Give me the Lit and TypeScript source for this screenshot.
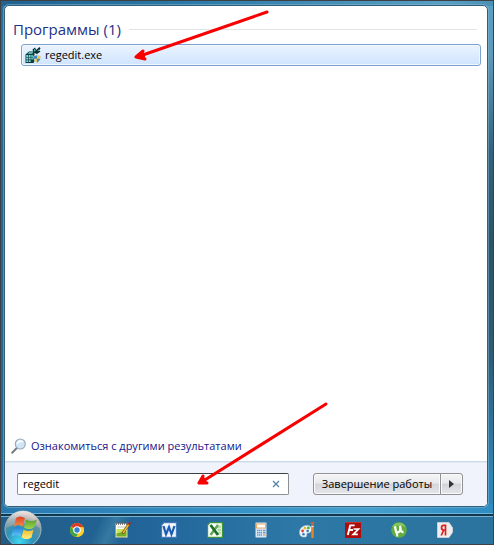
import { LitElement, html, css, svg } from "lit";
import { customElement, property, state } from "lit/decorators.js";

const icons: Record<string, unknown> = {
  chrome: svg`
    <circle cx="8" cy="8" r="7" fill="#f6c51e"/>
    <path d="M8 8 1.9 4.6A7 7 0 0 1 14.4 5.2L8 5.2Z" fill="#dc3a2b"/>
    <path d="M1.9 4.6A7 7 0 0 0 7.2 15L10.4 9.4 8 8 5.4 9.4Z" fill="#3fa445"/>
    <path d="M14.4 5.2A7 7 0 0 1 7.2 15L10.6 9 8 5.2Z" fill="#fbd02b"/>
    <circle cx="8" cy="8" r="3.8" fill="#fff"/><circle cx="8" cy="8" r="2.7" fill="#3a80d0"/>`,
  notepad: svg`
    <path d="M.5 1.500h12v14H.5z" fill="#fdfdf6" stroke="#8b8f80" stroke-width=".6"/>
    <path d="M1.500 7h10v7.500h-10z" fill="#c8e35c"/><path d="M1.500 11.500l10-2.500v5.500h-10z" fill="#72ad28"/>
    <path d="M1.500 .5v2.500M3.500 .5v2.500M5.500 .5v2.500M7.500 .5v2.500M9.500 .5v2.500M11.500 .5v2.500" stroke="#666" stroke-width=".8"/>
    <path d="M2.500 5h8" stroke="#b9bcb0" stroke-width=".8"/>
    <path d="M7.500 11.500 14 2" stroke="#704214" stroke-width="2.600"/><path d="M8 11 14 2.200" stroke="#f2c12d" stroke-width="1.500"/>
    <path d="M13.600 2.800 15.200 .5" stroke="#a5301e" stroke-width="2.400"/>`,
  word: svg`
    <path d="M3 .6h12.400v14.800H.6V3z" fill="#fff" stroke="#4579c0" stroke-width="1.200"/>
    <path d="M2 3.500h12v9.500H2z" fill="#e4eefa"/>
    <path d="M2.500 4 5 12.300 8 5 10.500 12.300 13.500 4" fill="none" stroke="#1d5cb4" stroke-width="2.200"/>`,
  excel: svg`
    <path d="M3 .6h12.400v14.800H.6V3z" fill="#fff" stroke="#3f963f" stroke-width="1.200"/>
    <path d="M10.500 2.500h3.500v11h-3.500z" fill="#d8edce"/><path d="M10.500 5h3.500M10.500 8h3.500M10.500 11h3.500" stroke="#7bb872" stroke-width=".7"/>
    <path d="M11 3 3.500 13" stroke="#62ab54" stroke-width="2.600"/><path d="M3.500 3 11 13" stroke="#1f6f2c" stroke-width="2.800"/>`,
  calc: svg`
    <rect x="2.500" y=".5" width="11" height="15" rx="1" fill="#d8e8f5" stroke="#86abc9" stroke-width=".8"/>
    <rect x="3.500" y="2" width="9" height="4" fill="#fff" stroke="#f0a255" stroke-width=".9"/>
    <path d="M4 8.500h5M4 10.800h5M4 13h5" stroke="#6f9bc3" stroke-width="1.400" stroke-dasharray="1.500 .5"/>
    <path d="M10 8.500h2.500M10 10.800h2.500" stroke="#6f9bc3" stroke-width="1.400"/><path d="M10 13h2.500" stroke="#f0a255" stroke-width="1.400"/>`,
  paint: svg`
    <path d="M.5 10.500C.5 5.500 5 3 9 3.500s4.500 4.500 2.500 6.500-2.500 0-3.500 1.500 1 3-2 3.500S.5 14 .5 10.500Z" fill="#eef6fb" stroke="#a5c4d8" stroke-width=".6"/>
    <circle cx="3.600" cy="9" r="1.400" fill="#e0442e"/><circle cx="6" cy="6.200" r="1.400" fill="#eeb62f"/>
    <circle cx="9.400" cy="6" r="1.400" fill="#54ae44"/><circle cx="4.500" cy="12.300" r="1.300" fill="#347bcb"/><circle cx="8.600" cy="9" r="1.300" fill="#3f74b5"/>
    <path d="M13.500 6v9" stroke="#e8842a" stroke-width="2.400" stroke-linecap="round"/><path d="M11.500 0h4l-1 4h-2z" fill="#b96a3e"/><path d="M12.300 4.500h2.400" stroke="#dde4ea" stroke-width="1.400"/>`,
  filezilla: svg`
    <path d="M0 0h16v16H0z" fill="#ae0b0b"/><path d="M0 0h16v1H0z" fill="#c73229"/>
    <path d="M9.700 3.400H5.200L2.800 13M4 8h4" fill="none" stroke="#fff" stroke-width="1.900"/>
    <path d="M8.500 7h5L8.200 12.300h4.600" fill="none" stroke="#fff" stroke-width="1.700"/>`,
  utorrent: svg`
    <circle cx="8" cy="8" r="7.800" fill="#62ad3d"/><path d="M1 5a7.800 7.800 0 0 1 14 0Q8 2 1 5Z" fill="#83c65c"/>
    <path d="M4 4.300c.5 3 .6 6.500 3 6s2.800-2.500 2-6.500M9.300 6c.4 3 .8 4.200 3.200 4" fill="none" stroke="#fff" stroke-width="2.300"/>
    <path d="M5 9 6.500 14.500" stroke="#fff" stroke-width="2"/>`,
  yandex: svg`
    <path d="M.5.500h11.500L15.700 6v4L12 15.500H.5z" fill="#eeeeef" stroke="#d5d7da" stroke-width=".8"/>
    <path d="M8.500 2.500v11M8.500 3.400H6.700C3.800 3.400 3.800 8 6.700 8h1.800M6.800 8 4.200 13.500" fill="none" stroke="#df1f1f" stroke-width="1.700"/>`,
  regedit: svg`
    <path d="M.5 7.500 4 4.500h5.500v9.500l-1 2H.5z" fill="#123b3e"/>
    <path d="M1.300 8h1.800v1.900H1.300zM3.800 8h1.800v1.900H3.800zM6.300 8h1.500v1.900H6.300zM1.300 10.600h1.800v1.900H1.300zM3.800 10.600h1.800v1.900H3.800zM6.300 10.600h1.500v1.900H6.300zM1.300 13.200h1.800v1.900H1.300zM3.800 13.200h1.800v1.900H3.800zM4.300 5.300h4l-1.200 1.500H2.700z" fill="#6fe0dc"/>
    <path d="M7.500 2.500 10 .5l1.200 2.500L14.500 0l1 1.500L14 3.500l1.500 1L12 7 8.500 5.500z" fill="#10282b"/>
    <path d="M8.900 2.600l1-.7.8 2-1.200.8zM12.200 3.800l1.700-1.300v1.700z" fill="#52cfcb"/>
    <path d="M8.500 9q2 0 3.500-1.200Q13.500 9 15.500 9q.2 4.800-3.500 6.700Q8.300 13.800 8.500 9Z" fill="#f4c93c" stroke="#c5d0d8" stroke-width=".7"/>
    <path d="M12 8.200V11.800H8.900Q8.600 10.500 8.700 9.300 10.500 9.200 12 8.200ZM12 11.800h3.200q-.6 2.400-3.200 3.600z" fill="#3b84cd"/>`,
  search: svg`
    <path d="M1.200 14.800 5.800 10" stroke="#777d84" stroke-width="2" stroke-linecap="round"/>
    <circle cx="9.300" cy="6" r="5" fill="#cfe6f7" stroke="#98a6b3" stroke-width="1.100"/>
    <path d="M5.800 6.500a3.700 3.700 0 0 1 6.800-2.500Q8 3.500 5.800 6.500Z" fill="#fff"/>`,
};

@customElement("app-icon")
class AppIcon extends LitElement {
  @property() name = "";
  static styles = css`
    :host { display: block; width: 16px; height: 16px; flex: none; }
    svg { display: block; width: 100%; height: 100%; }
  `;
  render() {
    return html`<svg viewBox="0 0 16 16" aria-hidden="true">${icons[this.name]}</svg>`;
  }
}

@customElement("start-menu")
class StartMenu extends LitElement {
  @state() query = "regedit";
  static styles = css`
    :host {
      display: flex; flex-direction: column; position: relative; box-sizing: border-box;
      background: #fff; border: 1px solid #315f7a; border-radius: 5px;
      box-shadow: 0 0 0 1px #83b6d088;
    }
    .results { flex: 1; padding: 12px 6px 0 8px; }
    .group { display: flex; align-items: center; gap: 8px; }
    h2 { margin: 0; font-weight: 400; font-size: 15px; line-height: 22px; color: #1e3287; }
    .rule { flex: 1; height: 1px; background: #e2e5e5; margin-right: 4px; }
    .item {
      display: flex; align-items: center; gap: 4px; box-sizing: border-box;
      width: calc(100% - 8px); height: 22px; margin: 4px 0 0 8px; padding: 0 3px;
      border: 1px solid #7da2ce; border-radius: 3px;
      background: linear-gradient(#ebf4fe, #cfe4fe); box-shadow: inset 0 0 0 1px #f0f7ff;
      font: inherit; color: #000; text-align: left;
    }
    .more {
      display: flex; align-items: center; gap: 4px; align-self: flex-start;
      margin: 0 0 6px 6px; height: 18px; color: #14148a; text-decoration: none;
    }
    footer {
      display: flex; align-items: flex-start; gap: 24px; padding: 11px 24px 11px 12px;
      border-top: 1px solid #ccd9ea; background: #f0f3fb; border-radius: 0 0 4px 4px;
      box-shadow: inset 0 1px #e0e8f4;
    }
    .search {
      display: flex; align-items: center; flex: 1; height: 22px; box-sizing: border-box;
      background: #fff; border: 1px solid #8c8e92; border-top-color: #3f4042; border-radius: 2px;
    }
    input {
      flex: 1; min-width: 0; padding: 0 5px; border: 0; outline: 0; background: none;
      font: inherit; color: #000;
    }
    .clear { display: flex; padding: 0 8px; border: 0; background: none; }
    .clear svg { width: 8px; height: 8px; }
    .power { display: flex; height: 22px; }
    .power button {
      font: inherit; color: #000; border: 1px solid #8f9194; padding: 0; box-sizing: border-box;
      background: linear-gradient(#f5f5f6, #e8e9eb 46%, #d2d4d7 50%, #e6e7ea);
      box-shadow: inset 0 0 0 1px #fafafa;
    }
    .power .down { width: 128px; border-radius: 3px 0 0 3px; white-space: nowrap; }
    .power .opts { display: flex; align-items: center; justify-content: center; width: 23px; margin-left: -1px; border-radius: 0 3px 3px 0; }
    .arrow { position: absolute; pointer-events: none; fill: none; stroke: #f90000; stroke-width: 3; stroke-linecap: round; stroke-linejoin: round; }
    .to-item { left: 126px; top: 2px; }
    .to-search { left: 190px; bottom: 17px; }
  `;
  render() {
    return html`
      <div class="results">
        <div class="group"><h2>Программы (1)</h2><div class="rule"></div></div>
        <button class="item"><app-icon name="regedit"></app-icon>regedit.exe</button>
      </div>
      <a class="more" href="#"><app-icon name="search"></app-icon>Ознакомиться с другими результатами</a>
      <footer>
        <div class="search">
          <input aria-label="Поиск" .value=${this.query}
            @input=${(e: Event) => (this.query = (e.target as HTMLInputElement).value)} />
          <button class="clear" aria-label="Очистить" @click=${() => (this.query = "")}>
            <svg viewBox="0 0 8 8"><path d="M1 1 7 7M7 1 1 7" stroke="#5086ad" stroke-width="1.300"/></svg>
          </button>
        </div>
        <div class="power">
          <button class="down">Завершение работы</button>
          <button class="opts" aria-label="Параметры">
            <svg width="5" height="8" viewBox="0 0 5 8"><path d="M0 0 5 4 0 8Z" fill="#333"/></svg>
          </button>
        </div>
      </footer>
      <svg class="arrow to-item" width="142" height="54" viewBox="0 0 142 54">
        <path d="M136 4 6 49M12 43 5 49 14 51" /><path d="M5 49 12 43 14 51Z" fill="#f90000" stroke-width="1"/>
      </svg>
      <svg class="arrow to-search" width="136" height="90" viewBox="0 0 136 90">
        <path d="M131 5 5 84M8 77 4 84 12 84" /><path d="M4 84 8 77 12 84Z" fill="#f90000" stroke-width="1"/>
      </svg>
    `;
  }
}

@customElement("task-bar")
class TaskBar extends LitElement {
  static styles = css`
    :host {
      display: flex; height: 30px; box-sizing: border-box; position: relative;
      border-top: 2px solid #12374f;
      background: linear-gradient(115deg, transparent 20%, #6bb9c444 23%, transparent 26%), linear-gradient(90deg, #225d86, #22659a 30%, #2d78a6 60%, #2b739d);
      box-shadow: inset 0 1px #77b2ce, 0 -1px #6db4d8;
    }
    button { border: 0; padding: 0; background: none; }
    .start { width: 53px; flex: none; position: relative; }
    .start svg { position: absolute; left: 3px; top: -6px; }
    nav { display: flex; }
    .app { display: flex; width: 46px; align-items: center; justify-content: center; }
  `;
  render() {
    const apps = [
      ["chrome", "Chrome"], ["notepad", "Notepad"], ["word", "Word"], ["excel", "Excel"],
      ["calc", "Калькулятор"], ["paint", "Paint"], ["filezilla", "FileZilla"],
      ["utorrent", "µTorrent"], ["yandex", "Яндекс"],
    ];
    return html`
      <button class="start" aria-label="Пуск">
        <svg width="38" height="34" viewBox="0 0 38 34">
          <defs>
            <radialGradient id="orb" cx=".4" cy=".85" r=".8">
              <stop offset="0" stop-color="#3fd8f4"/><stop offset=".45" stop-color="#2f93b8"/>
              <stop offset=".8" stop-color="#5f8f9d"/><stop offset="1" stop-color="#b9a9a6"/>
            </radialGradient>
            <linearGradient id="gloss" x2="0" y2="1">
              <stop stop-color="#fff" stop-opacity=".7"/><stop offset="1" stop-color="#f4c0b0" stop-opacity=".25"/>
            </linearGradient>
            <linearGradient id="red" x2="0" y2="1"><stop stop-color="#dd4420"/><stop offset="1" stop-color="#f48a4c"/></linearGradient>
            <linearGradient id="green" x2="0" y2="1"><stop stop-color="#55a02f"/><stop offset="1" stop-color="#9dd64e"/></linearGradient>
            <linearGradient id="blue" x2="0" y2="1"><stop stop-color="#1f7fd5"/><stop offset="1" stop-color="#62c6f8"/></linearGradient>
            <linearGradient id="gold" x2="0" y2="1"><stop stop-color="#f5b829"/><stop offset="1" stop-color="#fff080"/></linearGradient>
          </defs>
          <circle cx="19" cy="19" r="18" fill="url(#orb)" stroke="#98bac6"/>
          <path d="M2 18A17 17 0 0 1 36 18Q19 10 2 18Z" fill="url(#gloss)"/>
          <path d="M12 8q4-3 9 0l-2 8.500q-5-3-9 0z" fill="url(#red)"/>
          <path d="M22 9.500q5 3 11 0l-3 8q-5 3-10 0z" fill="url(#green)"/>
          <path d="M9.500 18q4-3 9 0l-2 8.500q-5-3-9 0z" fill="url(#blue)"/>
          <path d="M19.500 19.500q5 3 10 0l-2 8q-5 3-10 0z" fill="url(#gold)"/>
        </svg>
      </button>
      <nav>
        ${apps.map(([name, label]) => html`<button class="app" aria-label=${label}><app-icon name=${name}></app-icon></button>`)}
      </nav>
    `;
  }
}

@customElement("app-root")
class AppRoot extends LitElement {
  static styles = css`
    :host {
      display: flex; flex-direction: column; min-height: 100vh; box-sizing: border-box;
      border: 1px solid #3d4145; overflow: hidden;
      font: 11px/16px "Open Sans", "Noto Sans", sans-serif;
      background: linear-gradient(90deg, #21628f, #2c7ba8 40%, #5a9fc4 90%, #4a8fb4) 0 0 / 100% 5px no-repeat,
        linear-gradient(90deg, #2878ae, #3490c6 45%, #459fcd 75%, #2f8cc2) 0 100% / 100% 40px no-repeat,
        linear-gradient(90deg, #1f6a9e, #1f6a9e00 2%) 0 0 / 100% 100% no-repeat,
        linear-gradient(#5a9fc4, #5d9abb 10%, #34617b 28%, #2c5468 45%, #2f5b74 65%, #2f85b8 88%);
    }
    start-menu { flex: 1; margin: 4px 5px 7px 3px; }
  `;
  render() {
    return html`<start-menu></start-menu><task-bar></task-bar>`;
  }
}
